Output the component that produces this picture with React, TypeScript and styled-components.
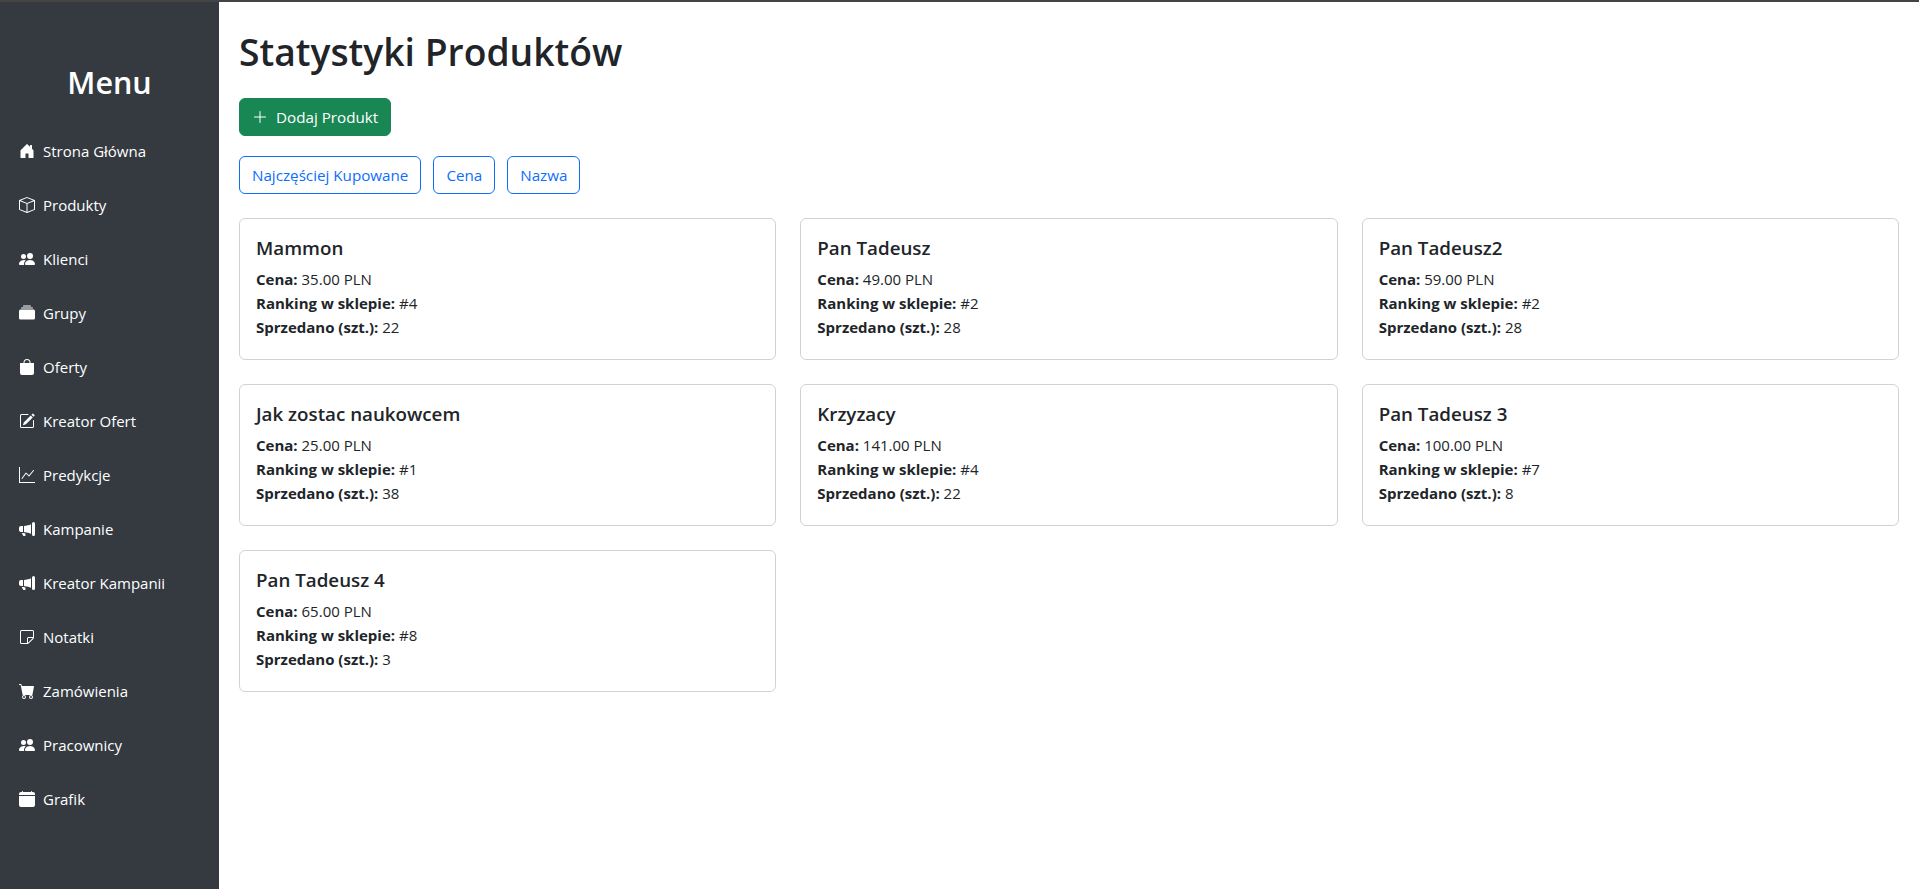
import styled, { createGlobalStyle } from "styled-components";
import {
    BsBagFill,
    BsBox,
    BsCalendarFill,
    BsCartFill,
    BsCollectionFill,
    BsGraphUp,
    BsHouseDoorFill,
    BsMegaphoneFill,
    BsPencilSquare,
    BsPeopleFill,
    BsPlusLg,
    BsSticky,
} from "react-icons/bs";

const menu = [
    { label: "Strona Główna", icon: <BsHouseDoorFill /> },
    { label: "Produkty", icon: <BsBox /> },
    { label: "Klienci", icon: <BsPeopleFill /> },
    { label: "Grupy", icon: <BsCollectionFill /> },
    { label: "Oferty", icon: <BsBagFill /> },
    { label: "Kreator Ofert", icon: <BsPencilSquare /> },
    { label: "Predykcje", icon: <BsGraphUp /> },
    { label: "Kampanie", icon: <BsMegaphoneFill /> },
    { label: "Kreator Kampanii", icon: <BsMegaphoneFill /> },
    { label: "Notatki", icon: <BsSticky /> },
    { label: "Zamówienia", icon: <BsCartFill /> },
    { label: "Pracownicy", icon: <BsPeopleFill /> },
    { label: "Grafik", icon: <BsCalendarFill /> },
];

const products = [
    { name: "Mammon", price: "35.00", rank: 4, sold: 22 },
    { name: "Pan Tadeusz", price: "49.00", rank: 2, sold: 28 },
    { name: "Pan Tadeusz2", price: "59.00", rank: 2, sold: 28 },
    { name: "Jak zostac naukowcem", price: "25.00", rank: 1, sold: 38 },
    { name: "Krzyzacy", price: "141.00", rank: 4, sold: 22 },
    { name: "Pan Tadeusz 3", price: "100.00", rank: 7, sold: 8 },
    { name: "Pan Tadeusz 4", price: "65.00", rank: 8, sold: 3 },
];

export default function App() {
    return (
        <>
            <GlobalStyle />
            <Page>
                <TopLine />
                <Layout>
                    <Sidebar>
                        <MenuTitle>Menu</MenuTitle>
                        <NavList>
                            {menu.map((item) => (
                                <NavLink key={item.label} href="#">
                                    {item.icon}
                                    <span>{item.label}</span>
                                </NavLink>
                            ))}
                        </NavList>
                    </Sidebar>
                    <Main>
                        <Title>Statystyki Produktów</Title>
                        <AddButton>
                            <BsPlusLg />
                            Dodaj Produkt
                        </AddButton>
                        <Filters>
                            <FilterButton>Najczęściej Kupowane</FilterButton>
                            <FilterButton>Cena</FilterButton>
                            <FilterButton>Nazwa</FilterButton>
                        </Filters>
                        <CardGrid>
                            {products.map((p) => (
                                <Card key={p.name}>
                                    <CardTitle>{p.name}</CardTitle>
                                    <CardLine><strong>Cena:</strong> {p.price} PLN</CardLine>
                                    <CardLine><strong>Ranking w sklepie:</strong> #{p.rank}</CardLine>
                                    <CardLine><strong>Sprzedano (szt.):</strong> {p.sold}</CardLine>
                                </Card>
                            ))}
                        </CardGrid>
                    </Main>
                </Layout>
            </Page>
        </>
    );
}

const GlobalStyle = createGlobalStyle`
    * {
        box-sizing: border-box;
    }
    html, body {
        margin: 0;
        background: #fff;
    }
    body {
        font-family: "Open Sans", "Noto Sans", sans-serif;
        font-size: 15px;
        line-height: 24px;
        color: #212529;
    }
`
const Page = styled.div`
    display: flex;
    flex-direction: column;
    height: 889px;
    overflow: hidden;
`
const TopLine = styled.div`
    height: 2px;
    flex: none;
    background: #444;
`
const Layout = styled.div`
    display: flex;
    flex: 1;
    min-height: 0;
`
const Sidebar = styled.aside`
    width: 219px;
    flex: none;
    background: #343a40;
    color: #fff;
    padding-top: 63px;
`
const MenuTitle = styled.h3`
    margin: 0 0 32px;
    font-size: 30.5px;
    font-weight: 600;
    line-height: 34px;
    text-align: center;
`
const NavList = styled.nav`
    display: flex;
    flex-direction: column;
    gap: 14px;
`
const NavLink = styled.a`
    display: flex;
    align-items: center;
    gap: 8px;
    height: 40px;
    padding: 0 19px;
    color: #fff;
    text-decoration: none;
    svg {
        width: 16px;
        height: 16px;
        flex: none;
    }
`
const Main = styled.main`
    flex: 1;
    min-width: 0;
    padding: 26px 20px 0;
`
const Title = styled.h1`
    margin: 0 0 22px;
    font-size: 37.25px;
    font-weight: 600;
    line-height: 48px;
`
const Button = styled.button`
    font-family: inherit;
    font-size: 15.2px;
    line-height: 24px;
    height: 38px;
    padding: 0 12px;
    border-radius: 6px;
    background: transparent;
`
const AddButton = styled(Button)`
    display: flex;
    align-items: center;
    gap: 8px;
    margin-bottom: 20px;
    border: 1px solid #198754;
    background: #198754;
    color: #fff;
    svg {
        width: 16px;
        height: 16px;
    }
`
const Filters = styled.div`
    display: flex;
    gap: 12px;
    margin-bottom: 24px;
`
const FilterButton = styled(Button)`
    border: 1px solid #0d6efd;
    color: #0d6efd;
`
const CardGrid = styled.div`
    display: grid;
    grid-template-columns: repeat(3, 1fr);
    gap: 24px;
`
const Card = styled.div`
    height: 142px;
    padding: 17px 16px 15px;
    border: 1px solid rgba(0, 0, 0, 0.175);
    border-radius: 6px;
`
const CardTitle = styled.h5`
    margin: 0 0 7px;
    font-size: 18.75px;
    font-weight: 600;
    line-height: 24px;
`
const CardLine = styled.p`
    margin: 0;
    strong {
        font-weight: 700;
    }
`
